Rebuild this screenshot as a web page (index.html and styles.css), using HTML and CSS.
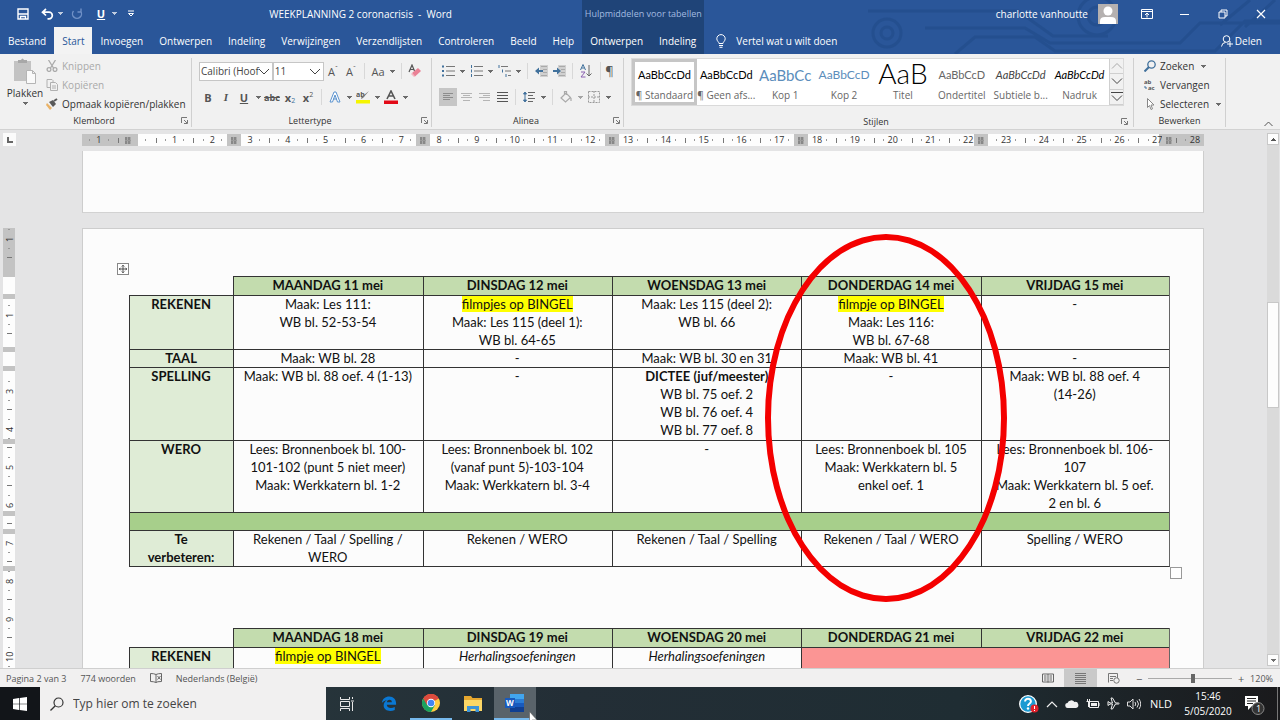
FILE: index.html
```
<!DOCTYPE html>
<html lang="nl-BE">
<head>
  <meta charset="UTF-8">
  <title>WEEKPLANNING 2 coronacrisis - Word</title>
  <meta name="viewport" content="width=device-width, initial-scale=1">
  <link rel="stylesheet" href="styles.css">
</head>
<body>
  <header class="header">
    <div class="header-left">
      <div class="titlebar">
        <div class="quick">
          <button aria-label="Opslaan"><svg width="12" height="12" viewBox="0 0 12 12"><path d="M1 1h10v10H1z" fill="none" stroke="#fff" stroke-width="1.4"/><path d="M1 6h10M3.5 11V8.5h5V11" fill="none" stroke="#fff" stroke-width="1.3"/></svg></button>
          <button aria-label="Ongedaan maken"><svg width="13" height="12" viewBox="0 0 13 12"><path d="M5 1L1.5 4.2 5 7.5M2 4.2h6a3.3 3.3 0 010 6.6H6.500" fill="none" stroke="#fff" stroke-width="1.7"/></svg></button>
          <i class="caret"></i>
          <button aria-label="Opnieuw" class="redo"><svg width="12" height="12" viewBox="0 0 12 12"><path d="M9.500 3A4.500 4.500 0 112.500 3M6.500 4h3.500V.5" fill="none" stroke="#6f90c6" stroke-width="1.400"/></svg></button>
          <button class="quick-u">U</button>
          <i class="caret"></i>
          <button aria-label="Werkbalk aanpassen"><svg width="8" height="8" viewBox="0 0 8 8"><path d="M1 1h6M1.500 3.500h5L4 6z" fill="none" stroke="#fff"/></svg></button>
        </div>
        <div class="title">WEEKPLANNING 2 coronacrisis&nbsp; -&nbsp; Word</div>
      </div>
      <nav class="tabs">
        <button>Bestand</button>
        <button class="active">Start</button>
        <button>Invoegen</button>
        <button>Ontwerpen</button>
        <button>Indeling</button>
        <button>Verwijzingen</button>
        <button>Verzendlijsten</button>
        <button>Controleren</button>
        <button>Beeld</button>
        <button>Help</button>
      </nav>
    </div>
    <div class="header-context">
      <div class="context-title">Hulpmiddelen voor tabellen</div>
      <nav class="tabs">
        <button>Ontwerpen</button>
        <button>Indeling</button>
      </nav>
    </div>
    <div class="header-right">
      <svg class="circuit" width="430" height="54" viewBox="0 0 430 54" fill="none" stroke="#204a86" stroke-width="3">
        <path d="M18 11h150l35 25h55M75 28h100l25 15h130l20-20h80M105 54l20-17h60l20 14h160l30-30h35M370 25l30-25M395 27l30-27"/>
        <circle cx="37" cy="33" r="14"/><circle cx="37" cy="33" r="6"/>
        <circle cx="247" cy="16" r="19"/><circle cx="247" cy="16" r="9"/>
      </svg>
      <div class="window-row">
        <span class="user">charlotte vanhoutte</span>
        <svg class="avatar" width="20" height="20" viewBox="0 0 20 20"><path fill="#b5b1b0" d="M0 0h20v20H0z"/><circle cx="10" cy="7" r="4.500" fill="#fff"/><path d="M2 20v-3q0-4 5-4h6q5 0 5 4v3z" fill="#fff"/></svg>
        <button aria-label="Weergaveopties lint"><svg width="12" height="10" viewBox="0 0 12 10"><path d="M.5.5h11v9H.5zM.5 2.500h11M6 8.500V4M4 6l2-2 2 2" fill="none" stroke="#fff"/></svg></button>
        <button aria-label="Minimaliseren"><svg width="10" height="10" viewBox="0 0 10 10"><path d="M0 5.500h9" stroke="#fff"/></svg></button>
        <button aria-label="Vorig formaat"><svg width="10" height="10" viewBox="0 0 10 10"><path d="M1 3h6v6H1zM3 3V1h6v6H7" fill="none" stroke="#fff"/></svg></button>
        <button aria-label="Sluiten"><svg width="10" height="10" viewBox="0 0 10 10"><path d="M1 1l8 8M9 1L1 9" stroke="#fff" stroke-width="1.200"/></svg></button>
      </div>
      <div class="tell-row">
        <button class="tell"><svg width="10" height="14" viewBox="0 0 10 14"><path d="M3 9.500C3 8 .8 7 .8 4.800a4.200 4.200 0 018.400 0C9.200 7 7 8 7 9.500zM3 11.500h4M3.500 13.300h3" fill="none" stroke="#fff"/></svg>Vertel wat u wilt doen</button>
        <button class="share"><svg width="12" height="12" viewBox="0 0 12 12"><circle cx="5.500" cy="4" r="3.300" fill="none" stroke="#fff"/><path d="M.5 11.500q.5-4 4-4M9 6v6M6 9h6" fill="none" stroke="#fff"/></svg>Delen</button>
      </div>
    </div>
  </header>

  <div class="ribbon">
    <section class="group clipboard">
      <div class="group-body">
        <button class="paste">
          <svg width="24" height="26" viewBox="0 0 24 26"><path d="M1 3h17v20H1z" fill="#c3c3c3"/><path d="M5 5V2h3q1.500-3 3 0h3v3z" fill="#a8a8a8"/><path d="M13.500 12.500h6l3 3v10h-9zM19.500 12.500v3h3" fill="#fafafa" stroke="#b5b5b5"/></svg>
          <span>Plakken</span>
          <i class="caret"></i>
        </button>
        <div class="stack">
          <button class="off"><svg width="12" height="12" viewBox="0 0 12 12" fill="none" stroke="#aaa" stroke-width="1.300"><path d="M2.500 0l5 8M9.500 0l-5 8"/><circle cx="3" cy="9.500" r="1.900"/><circle cx="9" cy="9.500" r="1.900"/></svg>Knippen</button>
          <button class="off"><svg width="12" height="12" viewBox="0 0 12 12" fill="#f1f1f1" stroke="#b0b0b0"><path d="M1 .5h5l1 1v7H1z"/><path d="M4.500 3.500h5l2 2v6h-7zM6 7h4M6 9h4"/></svg>Kopiëren</button>
          <button><svg width="12" height="12" viewBox="0 0 12 12"><path d="M1 5l5 5-2 2-4-5z" fill="#eab266"/><path d="M3 4l4-2 3 4-3 3z" fill="#595959"/><path d="M8 3l3-2" stroke="#595959" stroke-width="2"/></svg>Opmaak kopiëren/plakken</button>
        </div>
      </div>
      <div class="group-label"><span>Klembord</span><svg class="launcher" width="7" height="7" viewBox="0 0 7 7"><path d="M.5 6V.5H6M3 3l3 3M6.500 3v3.500H3" fill="none" stroke="#777"/></svg></div>
    </section>

    <section class="group font">
      <div class="group-body rows">
        <div class="row">
          <select class="font-name" aria-label="Lettertype"><option>Calibri (Hoof</option></select>
          <select class="font-size" aria-label="Tekengrootte"><option>11</option></select>
          <button class="tool">A<sup>ˆ</sup></button>
          <button class="tool">A<sup>ˇ</sup></button>
          <i class="sep"></i>
          <button class="tool">Aa</button><i class="caret"></i>
          <i class="sep"></i>
          <button class="tool" aria-label="Opmaak wissen"><svg width="14" height="14" viewBox="0 0 14 14"><path d="M1 8l3-7 2.500 6M2 5.500h4" fill="none" stroke="#555" stroke-width="1.200"/><path d="M4 9l6-5 3 3-6 5.500z" fill="#ea8296"/><path d="M4 9l3 3.500-1 .5-3-3z" fill="#f5b5c0"/></svg></button>
        </div>
        <div class="row">
          <button class="tool"><b>B</b></button>
          <button class="tool serif"><b><em>I</em></b></button>
          <button class="tool"><b><u>U</u></b></button><i class="caret"></i>
          <button class="tool small"><b><s>abc</s></b></button>
          <button class="tool"><b>x</b><sub>2</sub></button>
          <button class="tool"><b>x</b><sup>2</sup></button>
          <i class="sep"></i>
          <button class="tool" aria-label="Teksteffecten"><svg width="12" height="12" viewBox="0 0 12 12"><path d="M1 11L5 1h2l4 10H8.500L6 4 3.500 11zM4 8h4" fill="#fff" stroke="#5b93cf"/></svg></button><i class="caret"></i>
          <button class="tool" aria-label="Markeren"><svg width="14" height="14" viewBox="0 0 14 14"><text x="0" y="7" font-size="7" font-weight="700" fill="#555">ab</text><path d="M13 1L7 8l-2 1 .5-2z" fill="#777"/><path d="M0 10h14v3.500H0z" fill="#f5f500"/></svg></button><i class="caret"></i>
          <button class="tool" aria-label="Tekstkleur"><svg width="14" height="14" viewBox="0 0 14 14"><path d="M3 9l4-8 4 8M4.500 6h5" fill="none" stroke="#555" stroke-width="1.600"/><path d="M0 10.500h14V14H0z" fill="#e20a17"/></svg></button><i class="caret"></i>
        </div>
      </div>
      <div class="group-label"><span>Lettertype</span><svg class="launcher" width="7" height="7" viewBox="0 0 7 7"><path d="M.5 6V.5H6M3 3l3 3M6.500 3v3.500H3" fill="none" stroke="#777"/></svg></div>
    </section>

    <section class="group paragraph">
      <div class="group-body rows">
        <div class="row">
          <button class="tool" aria-label="Opsommingstekens"><svg width="13" height="12" viewBox="0 0 13 12"><path d="M4 1.500h9M4 6h9M4 10.500h9" stroke="#777"/><path d="M0 1.500h2M0 6h2M0 10.500h2" stroke="#41719c" stroke-width="2"/></svg></button><i class="caret"></i>
          <button class="tool" aria-label="Nummering"><svg width="13" height="12" viewBox="0 0 13 12"><path d="M4 1.500h9M4 6h9M4 10.500h9" stroke="#777"/><path d="M1.500 0v3M1.500 4.500v3M1.500 9v3" stroke="#41719c"/></svg></button><i class="caret"></i>
          <button class="tool" aria-label="Lijst met meerdere niveaus"><svg width="13" height="12" viewBox="0 0 13 12"><path d="M3 1.500h7M7 6h6M10 10.500h3" stroke="#777"/><path d="M1 0v3M4.500 4.500v3M8 9v3" stroke="#41719c"/></svg></button><i class="caret"></i>
          <i class="sep"></i>
          <button class="tool" aria-label="Inspringing verkleinen"><svg width="13" height="12" viewBox="0 0 13 12"><path d="M5 0h8v12H5z" fill="#d0d0d0"/><path d="M6 1.500h6M8 4.500h4M8 7.500h4M6 10.500h6" stroke="#aaa"/><path d="M0 6l4-3.500V5h4v2H4v2.500z" fill="#41719c"/></svg></button>
          <button class="tool" aria-label="Inspringing vergroten"><svg width="13" height="12" viewBox="0 0 13 12"><path d="M5 0h8v12H5z" fill="#d0d0d0"/><path d="M6 1.500h6M8 4.500h4M8 7.500h4M6 10.500h6" stroke="#aaa"/><path d="M8 6L4 2.500V5H0v2h4v2.500z" fill="#41719c"/></svg></button>
          <i class="sep"></i>
          <button class="tool" aria-label="Sorteren"><svg width="12" height="14" viewBox="0 0 12 14"><path d="M.5 6L3 .5 5.500 6M1.500 4h3" fill="none" stroke="#41719c"/><path d="M1 8h4l-4 5h4.500" fill="none" stroke="#8a5fb0"/><path d="M9 1v11M6.500 9.500L9 12l2.500-2.500" fill="none" stroke="#666"/></svg></button>
          <button class="tool pilcrow">¶</button>
        </div>
        <div class="row">
          <button class="tool pressed" aria-label="Links uitlijnen"><svg width="10" height="10" viewBox="0 0 10 10"><path d="M0 1.500h10M0 3.500h7M0 5.500h10M0 7.500h7" stroke="#8c8c8c"/></svg></button>
          <button class="tool" aria-label="Centreren"><svg width="11" height="10" viewBox="0 0 11 10"><path d="M0 1.500h11M2 3.500h7M0 5.500h11M2 8.500h7" stroke="#b5b5b5"/></svg></button>
          <button class="tool" aria-label="Rechts uitlijnen"><svg width="11" height="10" viewBox="0 0 11 10"><path d="M0 1.500h11M4 3.500h7M0 5.500h11M4 8.500h7" stroke="#b5b5b5"/></svg></button>
          <button class="tool" aria-label="Uitvullen"><svg width="11" height="10" viewBox="0 0 11 10"><path d="M0 .5h11M0 3.500h11M0 6.500h11M0 9.500h11" stroke="#555"/></svg></button>
          <i class="sep"></i>
          <button class="tool" aria-label="Regelafstand"><svg width="12" height="12" viewBox="0 0 12 12"><path d="M5 1.500h7M5 4.500h5M5 7.500h7M5 10.500h5" stroke="#666"/><path d="M2 2v8M.5 3L2 1l1.500 2zM.5 9L2 11l1.500-2z" fill="#41719c" stroke="#41719c"/></svg></button><i class="caret"></i>
          <i class="sep"></i>
          <button class="tool" aria-label="Arcering"><svg width="12" height="12" viewBox="0 0 12 12"><path d="M1 7l5-5 4.500 4.500-5 4.500zM4.500 3.500V.5h2V4M11 7v3" fill="none" stroke="#aaa" stroke-width="1.200"/></svg></button><i class="caret light"></i>
          <button class="tool" aria-label="Randen"><svg width="12" height="12" viewBox="0 0 12 12"><path d="M.5.5h11v11H.5zM6 0v12M0 6h12" fill="none" stroke="#999" stroke-dasharray="2 1"/></svg></button><i class="caret"></i>
        </div>
      </div>
      <div class="group-label"><span>Alinea</span><svg class="launcher" width="7" height="7" viewBox="0 0 7 7"><path d="M.5 6V.5H6M3 3l3 3M6.500 3v3.500H3" fill="none" stroke="#777"/></svg></div>
    </section>

    <section class="group styles">
      <div class="group-body gallery">
        <button class="style selected"><span class="sample">AaBbCcDd</span><span>¶ Standaard</span></button>
        <button class="style"><span class="sample">AaBbCcDd</span><span>¶ Geen afs...</span></button>
        <button class="style"><span class="sample kop1">AaBbCc</span><span>Kop 1</span></button>
        <button class="style"><span class="sample kop2">AaBbCcD</span><span>Kop 2</span></button>
        <button class="style"><span class="sample titel">AaB</span><span>Titel</span></button>
        <button class="style"><span class="sample ondertitel">AaBbCcD</span><span>Ondertitel</span></button>
        <button class="style"><span class="sample subtiel">AaBbCcDd</span><span>Subtiele b...</span></button>
        <button class="style"><span class="sample nadruk">AaBbCcDd</span><span>Nadruk</span></button>
        <div class="gallery-nav">
          <button class="off" aria-label="Omhoog"><svg width="12" height="8" viewBox="0 0 12 8"><path d="M1 6.500l5-5 5 5" fill="none" stroke="#aaa"/></svg></button>
          <button aria-label="Omlaag"><svg width="12" height="8" viewBox="0 0 12 8"><path d="M1 1.500l5 5 5-5" fill="none" stroke="#444"/></svg></button>
          <button aria-label="Meer"><svg width="12" height="10" viewBox="0 0 12 10"><path d="M0 .5h12M1 3.500l5 5 5-5" fill="none" stroke="#444"/></svg></button>
        </div>
      </div>
      <div class="group-label"><span>Stijlen</span><svg class="launcher" width="7" height="7" viewBox="0 0 7 7"><path d="M.5 6V.5H6M3 3l3 3M6.500 3v3.500H3" fill="none" stroke="#777"/></svg></div>
    </section>

    <section class="group editing">
      <div class="group-body">
        <div class="stack">
          <button><svg width="12" height="12" viewBox="0 0 12 12"><circle cx="7.500" cy="4.500" r="3.700" fill="none" stroke="#41719c" stroke-width="1.300"/><path d="M5 7l-4.500 4.500" stroke="#41719c" stroke-width="2"/></svg>Zoeken<i class="caret"></i></button>
          <button><svg width="12" height="14" viewBox="0 0 12 14"><text x="0" y="6" font-size="6" font-weight="700" fill="#555">ab</text><text x="4" y="12" font-size="6" font-weight="700" fill="#555">ac</text><path d="M1 8v2h2" fill="none" stroke="#41719c"/></svg>Vervangen</button>
          <button><svg width="12" height="12" viewBox="0 0 12 12"><path d="M3.500.5v9l2-2 1.500 4 1.500-.7L7 7h3z" fill="#fff" stroke="#888"/></svg>Selecteren<i class="caret"></i></button>
        </div>
      </div>
      <div class="group-label"><span>Bewerken</span></div>
    </section>
    <button class="collapse" aria-label="Lint samenvouwen"><svg width="9" height="6" viewBox="0 0 9 6"><path d="M.5 5l4-4 4 4" fill="none" stroke="#555"/></svg></button>
  </div>

  <main class="workspace">
    <div class="side">
      <div class="corner"><svg width="6" height="6" viewBox="0 0 6 6"><path d="M1 0v5h5" fill="none" stroke="#666" stroke-width="2"/></svg></div>
      <div class="vruler">
        <span class="out">1</span><span class="zero"></span><span>1</span><span></span><span>3</span><span>4</span><span>5</span><span>6</span><span>7</span><span>8</span><span>9</span><span>10</span>
        <i class="m1"></i><i class="m2"></i><i class="m3"></i><i class="m4"></i><i class="m5"></i><i class="m6"></i><i class="m7"></i>
      </div>
    </div>
    <div class="editor">
      <div class="hruler">
        <div class="marks"><span>1</span><span></span><span>1</span><span>2</span><span>3</span><span>4</span><span>5</span><span>6</span><span>7</span><span>8</span><span>9</span><span>10</span><span>11</span><span>12</span><span>13</span><span>14</span><span>15</span><span>16</span><span>17</span><span>18</span><span>19</span><span>20</span><span>21</span><span>22</span><span>23</span><span>24</span><span>25</span><span>26</span><span>27</span><span>28</span></div>
        <i class="c1"></i><i class="c2"></i><i class="c3"></i><i class="c4"></i><i class="c5"></i><i class="c6"></i><i class="c7"></i>
      </div>
      <div class="page page-end"></div>
      <div class="page">
        <div class="plan">
          <span class="move"><svg width="12" height="12" viewBox="0 0 12 12"><path d="M6 1.500v9M1.500 6h9M4.500 3L6 1.500 7.500 3M4.500 9L6 10.500 7.500 9M3 4.500L1.500 6 3 7.500M9 4.500L10.500 6 9 7.500" fill="none" stroke="#333"/></svg></span>
          <table>
            <colgroup><col class="subject"><col class="day"><col class="day"><col class="day"><col class="thursday"><col class="day"></colgroup>
            <tr class="loose"><td class="empty"></td><th class="date">MAANDAG 11 mei</th><th class="date">DINSDAG 12 mei</th><th class="date">WOENSDAG 13 mei</th><th class="date">DONDERDAG 14 mei</th><th class="date">VRIJDAG 15 mei</th></tr>
            <tr>
              <th>REKENEN</th>
              <td>Maak: Les 111:<br>WB bl. 52-53-54</td>
              <td><mark>filmpjes op BINGEL</mark><br>Maak: Les 115 (deel 1):<br>WB bl. 64-65</td>
              <td>Maak: Les 115 (deel 2):<br>WB bl. 66</td>
              <td><mark>filmpje op BINGEL</mark><br>Maak: Les 116:<br>WB bl. 67-68</td>
              <td>-</td>
            </tr>
            <tr><th>TAAL</th><td>Maak: WB bl. 28</td><td>-</td><td>Maak: WB bl. 30 en 31</td><td>Maak: WB bl. 41</td><td>-</td></tr>
            <tr class="loose">
              <th>SPELLING</th>
              <td>Maak: WB bl. 88 oef. 4 (1-13)</td>
              <td>-</td>
              <td><b>DICTEE (juf/meester)</b><br>WB bl. 75 oef. 2<br>WB bl. 76 oef. 4<br>WB bl. 77 oef. 8</td>
              <td>-</td>
              <td>Maak: WB bl. 88 oef. 4<br>(14-26)</td>
            </tr>
            <tr>
              <th>WERO</th>
              <td>Lees: Bronnenboek bl. 100-<br>101-102 (punt 5 niet meer)<br>Maak: Werkkatern bl. 1-2</td>
              <td>Lees: Bronnenboek bl. 102<br>(vanaf punt 5)-103-104<br>Maak: Werkkatern bl. 3-4</td>
              <td>-</td>
              <td>Lees: Bronnenboek bl. 105<br>Maak: Werkkatern bl. 5<br>enkel oef. 1</td>
              <td>Lees: Bronnenboek bl. 106-<br>107<br>Maak: Werkkatern bl. 5 oef.<br>2 en bl. 6</td>
            </tr>
            <tr><td class="band" colspan="6">&nbsp;</td></tr>
            <tr>
              <th>Te<br>verbeteren:</th>
              <td>Rekenen / Taal / Spelling /<br>WERO</td>
              <td>Rekenen / WERO</td>
              <td>Rekenen / Taal / Spelling</td>
              <td>Rekenen / Taal / WERO</td>
              <td>Spelling / WERO</td>
            </tr>
          </table>
          <span class="resize"></span>
          <div class="circle"></div>
        </div>
        <div class="plan">
          <table>
            <colgroup><col class="subject"><col class="day"><col class="day"><col class="day"><col class="thursday"><col class="day"></colgroup>
            <tr class="loose"><td class="empty"></td><th class="date">MAANDAG 18 mei</th><th class="date">DINSDAG 19 mei</th><th class="date">WOENSDAG 20 mei</th><th class="date">DONDERDAG 21 mei</th><th class="date">VRIJDAG 22 mei</th></tr>
            <tr><th>REKENEN</th><td><mark>filmpje op BINGEL</mark><br>&nbsp;</td><td><em>Herhalingsoefeningen</em></td><td><em>Herhalingsoefeningen</em></td><td class="holiday" colspan="2"></td></tr>
          </table>
        </div>
      </div>
    </div>
    <div class="scrollbar">
      <button aria-label="Omhoog schuiven"><i class="up"></i></button>
      <div class="track"><div class="thumb"></div></div>
      <button aria-label="Omlaag schuiven"><i class="caret"></i></button>
    </div>
  </main>

  <footer class="status">
    <span>Pagina 2 van 3</span>
    <span>774 woorden</span>
    <svg width="12" height="10" viewBox="0 0 12 10"><path d="M6 1.500v8M6 1.500Q4 .5.500.5v8q3.500 0 5.500 1M6 9.500q1-1 5.500-1v-8Q8 .5 6 1.500M7.500 3l3 3.500M10.500 3l-3 3.500" fill="none" stroke="#666"/></svg>
    <span>Nederlands (België)</span>
    <div class="views">
      <button aria-label="Leesmodus"><svg width="12" height="10" viewBox="0 0 12 10"><path d="M6 1v8.500M.5 1h11v8H.5zM2 3h2.500M2 5h2.500M2 7h2.500M7.500 3H10M7.500 5H10M7.500 7H10" fill="none" stroke="#666"/></svg></button>
      <button class="on" aria-label="Afdrukweergave"><svg width="11" height="11" viewBox="0 0 11 11"><path d="M0 .5h11M0 2.500h11M0 4.500h11M0 6.500h11M0 8.500h11M0 10.500h11" stroke="#777"/></svg></button>
      <button aria-label="Weblay-out"><svg width="12" height="11" viewBox="0 0 12 11"><path d="M.5 9.500v-9h9V5M2 3.500h6M2 5.500h3M2 7.500h3" fill="none" stroke="#777"/><circle cx="8.500" cy="7.500" r="2.700" fill="#f1f1f1" stroke="#777"/></svg></button>
    </div>
    <button class="zoom-btn">−</button>
    <input class="zoom" type="range" min="0" max="100" value="53" aria-label="In- en uitzoomen">
    <button class="zoom-btn">+</button>
    <span class="percent">120%</span>
  </footer>

  <div class="taskbar">
    <button class="start" aria-label="Start"><svg width="14" height="14" viewBox="0 0 14 14" fill="#fff"><path d="M0 2l6-1v5.700H0zM6.700.9L14 0v6.700H6.700zM0 7.300h6V13l-6-1zM6.700 7.300H14V14l-7.300-.9z"/></svg></button>
    <label class="search"><svg width="14" height="14" viewBox="0 0 14 14"><circle cx="8.500" cy="5.500" r="4.500" fill="none" stroke="#333" stroke-width="1.200"/><path d="M5.300 8.700L.5 13.500" stroke="#333" stroke-width="1.300"/></svg><input type="text" placeholder="Typ hier om te zoeken"></label>
    <button class="app" aria-label="Taakweergave"><svg width="14" height="14" viewBox="0 0 14 14"><path d="M.5 0v2.500h9V0M.5 14v-2.500h9V14M.5 4.500h9v5h-9zM12.500 0v2M12.500 5v9M11 4h3" fill="none" stroke="#e8e8e8"/></svg></button>
    <button class="app" aria-label="Edge"><svg width="16" height="17" viewBox="0 0 18 18"><path d="M1 8.500C1.500 3.500 5 1 9.300 1 14 1 17 4.300 17 9v1.500H6.500c.3 4 5.500 4.500 9 2.300v3.400c-5 2.500-12.500 1.300-12.500-5.200 0-2.500 1.500-4.700 3.800-5.700C4 5.500 2 6.700 1 8.500zM6.600 7.500h5.600c0-3.600-5-3.700-5.600 0z" fill="#0a78d4"/></svg></button>
    <button class="app open" aria-label="Chrome"><svg width="18" height="18" viewBox="0 0 18 18"><circle cx="9" cy="9" r="9" fill="#ffcd42"/><path d="M9 9L1.200 4.500A9 9 0 0116.800 4.500z" fill="#dd4b3e"/><path d="M9 9L1.200 4.500A9 9 0 009 18l4-7z" fill="#1aa260"/><path d="M9 5h7.900a9 9 0 00-15.600-.6L5 11z" fill="#dd4b3e"/><circle cx="9" cy="9" r="4.200" fill="#fff"/><circle cx="9" cy="9" r="3.300" fill="#4285f4"/></svg></button>
    <button class="app" aria-label="Verkenner"><svg width="18" height="16" viewBox="0 0 18 16"><path d="M0 0h7l1.500 2H18v13H0z" fill="#e5a72f"/><path d="M0 4h18v11H0z" fill="#fcd766"/><path d="M3 16v-6h12v6h-3.500v-3h-5v3z" fill="#3d94d8"/></svg></button>
    <button class="app open current" aria-label="Word"><svg width="20" height="18" viewBox="0 0 20 18"><path d="M5 0h14v6H5z" fill="#41a5ee"/><path d="M5 5h14v4H5z" fill="#2b7cd3"/><path d="M5 9h14v4H5z" fill="#185abd"/><path d="M5 13h14v5H5z" fill="#103f91"/><path d="M0 4h10v10H0z" fill="#185abd"/><text x="1" y="12" font-size="8" font-weight="700" fill="#fff">W</text></svg></button>
    <svg class="cursor" width="9" height="12" viewBox="0 0 9 12"><path d="M.5.5v11l3-2.500H8z" fill="#fff" stroke="#555" stroke-width=".6"/></svg>
    <div class="tray">
      <svg width="20" height="18" viewBox="0 0 20 18"><circle cx="9" cy="9" r="8.300" fill="#1b9ad2" stroke="#fff" stroke-width="1.300"/><path d="M6 6.500q.3-2.700 3-2.700t3 2.500q0 1.400-1.600 2.400Q9 9.600 9 11" fill="none" stroke="#fff" stroke-width="1.900"/><circle cx="9" cy="13.500" r="1.200" fill="#fff"/><circle cx="15.500" cy="13.500" r="4" fill="#e0202b"/><path d="M15.500 11v3M15.500 15v1" stroke="#fff"/></svg>
      <svg width="12" height="8" viewBox="0 0 12 8"><path d="M1 7l5-5 5 5" fill="none" stroke="#eee" stroke-width="1.200"/></svg>
      <svg width="14" height="10" viewBox="0 0 14 10"><path d="M3 9a2.500 2.500 0 01-.5-5A4 4 0 019.500 3 3 3 0 0111 9z" fill="#f0f0f0"/></svg>
      <svg width="14" height="10" viewBox="0 0 14 10"><path d="M3.500 2.500h9v6h-9zM13 4v3" fill="none" stroke="#eee"/><path d="M5 4h6v3H5z" fill="#eee"/><path d="M1.500 0v2M3.500 0v2M.5 2.500h4M2.500 3v5" stroke="#eee"/></svg>
      <svg width="13" height="13" viewBox="0 0 13 13"><path d="M1 4.500L3 6h2.500L4 1h1.500l3 5h3q1.500.5 0 1h-3l-3 5H4l1.500-5H3L1 8.500z" fill="none" stroke="#eee"/></svg>
      <svg width="14" height="12" viewBox="0 0 14 12"><path d="M.5 4v4H3l3 3V1L3 4zM8 4q1.500 2 0 4M10 2.500q3 3.500 0 7M12 1q3.500 5 0 10" fill="none" stroke="#ddd"/></svg>
      <span class="lang">NLD</span>
      <div class="clock">15:46<br>5/05/2020</div>
      <svg class="note" width="22" height="22" viewBox="0 0 22 22"><path d="M1 2h13v10H8l-4 4v-4H1z" fill="#fff"/><path d="M3 4.500h9M3 7h9M3 9.500h6" stroke="#222"/><circle cx="14" cy="14.500" r="6" fill="#333" stroke="#888"/><text x="12" y="18" font-size="9" fill="#fff">1</text></svg>
    </div>
  </div>
</body>
</html>
```
FILE: styles.css
```
* { box-sizing: border-box; }
body { margin: 0; height: 100vh; display: flex; flex-direction: column; overflow: hidden; background: #e4e4e5; color: #333; font-family: "Open Sans", "Noto Sans", sans-serif; font-size: 10px; }
button { margin: 0; padding: 0; border: none; background: none; color: inherit; font: inherit; white-space: nowrap; }
svg { display: block; flex: none; }
.caret { flex: none; width: 10px; height: 3px; background: linear-gradient(currentColor, currentColor) center top / 5px 1px no-repeat, linear-gradient(currentColor, currentColor) center 1px / 3px 1px no-repeat, linear-gradient(currentColor, currentColor) center 2px / 1px 1px no-repeat; opacity: 0.7; }
.light { opacity: 0.4; }

/* title bar and tabs */
.header { display: flex; flex: none; background: #2a5699; color: #fff; }
.titlebar { display: flex; align-items: center; height: 27px; }
.quick { display: flex; align-items: center; gap: 4px; padding-left: 11px; }
.quick button { width: 16px; display: flex; justify-content: center; margin-left: 4px; }
.quick .caret { width: 8px; margin: 0 -3px; }
.quick-u { font-size: 11px; font-weight: bold; text-decoration: underline; }
.title { flex: 1; text-align: center; }
.tabs { display: flex; height: 27px; }
.tabs button { padding: 0 8px; }
.tabs .active { background: #f3f3f3; color: #2a5699; }
.header-context { background: #1f4478; }
.context-title { height: 27px; line-height: 27px; text-align: center; color: #a3bbe0; font-size: 9px; }
.header-right { position: relative; flex: 1; }
.circuit { position: absolute; top: 0; right: 0; opacity: 0.5; }
.window-row, .tell-row { position: relative; display: flex; align-items: center; height: 27px; }
.window-row { justify-content: flex-end; }
.window-row button { width: 38px; display: flex; justify-content: center; }
.avatar { margin: 0 10px; }
.tell-row { justify-content: space-between; padding: 0 18px 0 12px; }
.tell, .share { display: flex; align-items: center; gap: 10px; }
.share { gap: 2px; }

/* ribbon */
.ribbon { display: flex; flex: none; height: 76px; padding-top: 4px; background: #f1f1f1; border-bottom: 1px solid #d2d2d2; }
.group { display: flex; flex-direction: column; padding: 0 7px; border-right: 1px solid #d0d0d0; margin-bottom: 2px; }
.group-body { display: flex; height: 59px; }
.group-label { display: flex; align-items: center; height: 14px; font-size: 9px; }
.group-label span { flex: 1; text-align: center; }
.launcher { margin-right: -4px; }
.clipboard { width: 192px; }
.font { width: 240px; }
.paragraph { width: 192px; }
.styles { flex: 1; padding: 0 9px 0 7px; }
.editing { width: 92px; }
.paste { width: 36px; display: flex; flex-direction: column; align-items: center; gap: 2px; }
.stack { display: flex; flex-direction: column; justify-content: space-between; height: 54px; margin-left: 3px; }
.stack button { display: flex; align-items: center; gap: 4px; height: 16px; }
.off { color: #a9a9a9; }
.rows { flex-direction: column; gap: 8px; padding-top: 4px; }
.row { display: flex; align-items: center; height: 18px; }
select { appearance: none; height: 19px; padding: 0 0 0 1px; border: 1px solid #c6c6c6; border-radius: 0; color: #444; font: inherit; background: #fff url("data:image/svg+xml,%3Csvg xmlns='http://www.w3.org/2000/svg' width='12' height='7'%3E%3Cpath d='M1 1l5 5 5-5' fill='none' stroke='%23444'/%3E%3C/svg%3E") right 2px center no-repeat; }
.font-name { width: 78px; }
.font-size { width: 54px; }
.tool { width: 18px; height: 18px; flex: none; display: flex; align-items: center; justify-content: center; color: #555; font-size: 11px; }
.tool sup, .tool sub { font-size: 7px; line-height: 7px; }
.tool sup { margin-bottom: 6px; }
.tool sub { margin-top: 6px; color: #41719c; }
.serif { font-family: "Liberation Serif", serif; }
.small { font-size: 9px; }
.pilcrow { margin-left: 5px; border-left: 1px solid #d8d8d8; font-size: 13px; }
.pressed { background: #c6c6c6; }
.sep { width: 9px; height: 16px; flex: none; background: linear-gradient(#d8d8d8, #d8d8d8) center / 1px 100% no-repeat; }
.collapse { width: 54px; display: flex; justify-content: flex-end; align-items: flex-end; padding: 0 7px 2px 0; }

.gallery { height: 50px; margin-bottom: 9px; background: #fff; border: 1px solid #dadada; }
.style { flex: 1 1 0; min-width: 0; overflow: hidden; display: flex; flex-direction: column; align-items: center; justify-content: flex-end; padding-bottom: 3px; color: #666; }
.selected { border: 3px solid #c6c6c6; padding-bottom: 0; }
.sample { height: 26px; line-height: 26px; font-family: Lato, sans-serif; font-size: 11px; color: #000; }
.kop1 { font-size: 15px; color: #5b8dbb; }
.kop2 { font-size: 12px; color: #5b8dbb; }
.titel { font-size: 28px; font-weight: 300; line-height: 22px; }
.ondertitel { color: #666; }
.subtiel { font-style: italic; color: #444; }
.nadruk { font-style: italic; }
.gallery-nav { width: 14px; display: flex; flex-direction: column; background: #f1f1f1; }
.gallery-nav button { flex: 1; display: flex; align-items: center; justify-content: center; border: 1px solid #cfcfcf; border-width: 0 0 1px 1px; }

/* document area */
.workspace { display: flex; flex: 1; min-height: 0; }
.side { width: 19px; padding: 3px 3px 0; display: flex; flex-direction: column; overflow: hidden; }
.corner { flex: none; width: 13px; height: 13px; background: #fbfbfb; display: flex; align-items: center; justify-content: center; }
.vruler { position: relative; width: 12px; margin-top: 82px; overflow: hidden; flex: none; background: linear-gradient(#c3c3c3 49px, #fdfdfd 49px); }
.vruler span { display: flex; align-items: center; justify-content: center; height: 38px; writing-mode: vertical-rl; transform: rotate(180deg); font-size: 9px; background: linear-gradient(#777, #777) center top / 5px 1px no-repeat, linear-gradient(#999, #999) center 25% / 2px 1px no-repeat, linear-gradient(#999, #999) center 75% / 2px 1px no-repeat; }
.vruler .out { margin-top: -8px; }
.vruler i { position: absolute; left: 0; width: 12px; height: 5px; background: #c3c3c3; }
.m1 { top: 66px; }
.m2 { top: 119px; }
.m3 { top: 138px; }
.m4 { top: 211px; }
.m5 { top: 283px; }
.m6 { top: 301px; }
.m7 { top: 338px; }
.editor { flex: 1; min-width: 0; padding: 4px 63px 0 63px; overflow: hidden; }
.hruler { position: relative; height: 12px; margin-bottom: 5px; background: linear-gradient(90deg, #c3c3c3 5%, #fdfdfd 5%, #fdfdfd 96%, #c3c3c3 96%); }
.marks { display: flex; height: 12px; overflow: hidden; }
.marks span { flex: none; width: 3.37%; display: flex; align-items: center; justify-content: center; font-size: 9px; line-height: 12px; background: linear-gradient(#777, #777) left center / 1px 5px no-repeat, linear-gradient(#999, #999) 25% center / 1px 2px no-repeat, linear-gradient(#999, #999) 75% center / 1px 2px no-repeat; }
.marks span:first-child { margin-left: -2px; }
.hruler i { position: absolute; top: 0; width: 14px; height: 12px; background: linear-gradient(#999, #999) center / 6px 1px no-repeat, repeating-linear-gradient(90deg, #888 0 2px, #aaa 2px 3px) center / 6px 7px no-repeat #c3c3c3; }
.c1 { left: 3.5%; }
.c2 { left: 12.9%; }
.c3 { left: 29.8%; }
.c4 { left: 46.6%; }
.c5 { left: 63.5%; }
.c6 { left: 79.5%; }
.c7 { left: 96.3%; }
.page { padding: 47px 33px 40px 46px; background: #fcfcfc; border: 1px solid #cdcdcd; border-bottom: none; }
.page-end { height: 62px; padding: 0; margin-bottom: 15px; border-top: none; border-bottom: 1px solid #d2d2d2; }
.plan { position: relative; margin-bottom: 61px; }
.plan table { width: 100%; table-layout: fixed; border-collapse: separate; border-spacing: 0; font-family: Lato, sans-serif; font-size: 13px; line-height: 18px; color: #111; }
.subject { width: 10%; }
.day { width: 18.2%; }
.thursday { width: 17.2%; }
.plan th, .plan td { padding: 0; height: 18px; text-align: center; vertical-align: top; white-space: nowrap; box-shadow: inset 1px 1px 0 #333; }
.plan th { background: #dfecd6; font-weight: bold; }
.plan .date { background: #c3dcae; }
.plan .loose > * { padding-bottom: 1px; }
.plan .empty { box-shadow: none; }
.plan .band { background: #a7cf8b; }
.plan .holiday { background: #fb9594; }
.plan tr > :last-child { border-right: 1px solid #666; }
.plan tr:last-child > * { border-bottom: 1px solid #333; }
mark { background: #ff0; color: inherit; }
.move { position: absolute; top: -13px; left: -12px; border: 1px solid #888; background: #fff; }
.move svg { width: 10px; height: 10px; }
.resize { position: absolute; left: 100%; top: 100%; width: 12px; height: 12px; border: 1px solid #999; background: #fff; }
.circle { position: absolute; left: 61.1%; top: -42px; width: 23.2%; height: 368px; border: 6px solid #f40000; border-radius: 50%; }

.scrollbar { width: 13px; display: flex; flex-direction: column; padding: 3px 1px 2px 0; }
.scrollbar button { height: 12px; display: flex; align-items: center; justify-content: center; background: #fdfdfd; border: 1px solid #c8c8c8; }
.up { width: 5px; height: 3px; background: linear-gradient(#555, #555) center top / 1px 1px no-repeat, linear-gradient(#555, #555) center 1px / 3px 1px no-repeat, linear-gradient(#555, #555) center 2px / 5px 1px no-repeat; }
.track { flex: 1; padding-top: 157px; background: #dadada; }
.thumb { height: 106px; background: #fdfdfd; border: 1px solid #c8c8c8; }

/* status bar */
.status { flex: none; display: flex; align-items: center; height: 19px; padding: 0 7px 0 6px; background: #f1f0f0; border-top: 1px solid #cfcfcf; color: #555; font-size: 9px; gap: 14px; }
.views { display: flex; align-self: stretch; margin-left: auto; }
.views button { width: 33px; display: flex; align-items: center; justify-content: center; }
.views .on { background: #c9c9c9; }
.zoom-btn { width: 8px; font-size: 11px; margin: 0 -9px; }
.zoom { appearance: none; width: 84px; height: 10px; margin: 0; background: linear-gradient(#aaa, #aaa) center / 100% 1px no-repeat; }
.zoom::-webkit-slider-thumb { appearance: none; width: 4px; height: 9px; background: #666; }

/* taskbar */
.taskbar { position: relative; flex: none; display: flex; height: 33px; background: linear-gradient(90deg, #2a3b3f, #232e36 45%, #1f2d33 75%, #1a1a1c); color: #fff; }
.start { width: 40px; display: flex; align-items: center; justify-content: center; background: #121519; }
.search { width: 286px; display: flex; align-items: center; gap: 9px; padding-left: 10px; background: #f1f0f0; }
.search input { flex: 1; min-width: 0; padding: 0; border: none; background: none; font: inherit; font-size: 12px; }
.search input::placeholder { color: #444; }
.app { width: 42px; display: flex; align-items: center; justify-content: center; }
.open { border-bottom: 2px solid #76b9ed; }
.current { background: #59636a; }
.cursor { position: absolute; left: 529px; bottom: -3px; }
.tray { display: flex; align-items: center; gap: 7px; margin-left: auto; padding-right: 2px; border-right: 1px solid #777; margin-right: 2px; }
.lang { font-size: 11px; margin-left: 2px; }
.clock { width: 58px; text-align: center; line-height: 15px; }
.note { margin: 2px 9px 0 0; }
```
